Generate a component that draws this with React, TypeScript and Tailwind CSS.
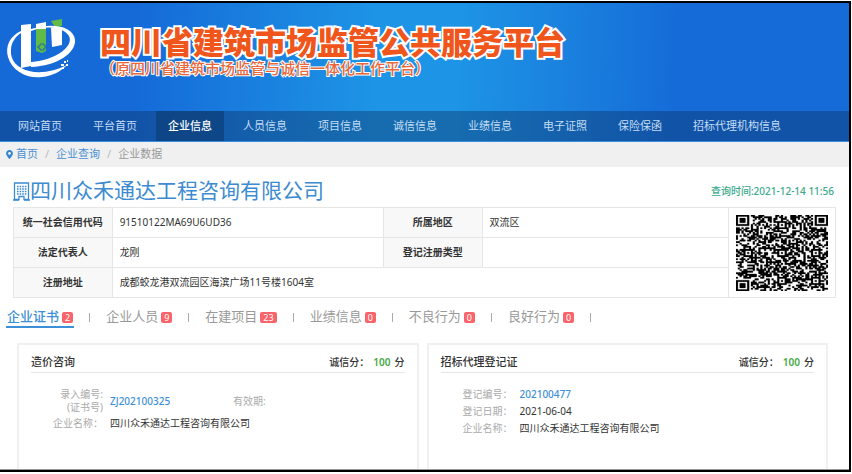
import * as React from "react";
import clsx from "clsx";
import { FaMapMarkerAlt } from "react-icons/fa";

const NAV_ITEMS = [
  "网站首页",
  "平台首页",
  "企业信息",
  "人员信息",
  "项目信息",
  "诚信信息",
  "业绩信息",
  "电子证照",
  "保险保函",
  "招标代理机构信息",
];

const TABS = [
  { label: "企业证书", count: 2 },
  { label: "企业人员", count: 9 },
  { label: "在建项目", count: 23 },
  { label: "业绩信息", count: 0 },
  { label: "不良行为", count: 0 },
  { label: "良好行为", count: 0 },
];

const QR_SIZE = 49;
const QR_ALIGN = [6, 24, 42];

// finder and alignment squares are fixed, the rest is filled from a small LCG
function buildQrPath() {
  let seed = 20211214;
  const rand = () => {
    seed = (seed * 1103515 + 12345) % 2147483648;
    return seed / 2147483648;
  };
  const isDark = (x: number, y: number, noise: boolean) => {
    for (const [cx, cy] of [
      [3, 3],
      [QR_SIZE - 4, 3],
      [3, QR_SIZE - 4],
    ]) {
      const d = Math.max(Math.abs(x - cx), Math.abs(y - cy));
      if (d <= 4) return d !== 2 && d !== 4;
    }
    for (const cx of QR_ALIGN) {
      for (const cy of QR_ALIGN) {
        const d = Math.max(Math.abs(x - cx), Math.abs(y - cy));
        const corner =
          (cx === 6 && cy === 6) ||
          (cx === 6 && cy === 42) ||
          (cx === 42 && cy === 6);
        if (!corner && d <= 2) return d !== 1;
      }
    }
    if (x === 6) return y % 2 === 0;
    if (y === 6) return x % 2 === 0;
    return noise;
  };
  let path = "";
  for (let y = 0; y < QR_SIZE; y++) {
    for (let x = 0; x < QR_SIZE; x++) {
      if (isDark(x, y, rand() < 0.52)) path += `M${x} ${y}h1v1h-1z`;
    }
  }
  return path;
}

function QrCode() {
  const path = React.useMemo(buildQrPath, []);
  return (
    <svg
      viewBox={`0 0 ${QR_SIZE} ${QR_SIZE}`}
      preserveAspectRatio="none"
      className="mx-auto h-[76px] w-[92px]"
      role="img"
      aria-label="二维码"
    >
      <path d={path} fill="#000" stroke="#000" strokeWidth="0.15" />
    </svg>
  );
}

function Logo() {
  return (
    <svg viewBox="4 17 76 66" className="h-[66px] w-[76px] shrink-0">
      {/* towers */}
      <path d="M21 25L31 24V66L21 68Z" fill="#fff" />
      <path d="M36 24L46 22V30H36Z" fill="#fff" />
      <path d="M51 28L62 27V45L52 47Z" fill="#fff" />
      <path d="M36 29H46V51L42 53L36 51Z" fill="#62bb46" />
      <path d="M51 21L62 19V26L55 27Z" fill="#62bb46" />
      <path
        d="M38 46h2v-2h4v2h2v2h-2v2h-4v-2h-2z"
        fill="none"
        stroke="#1b6fb0"
      />
      {/* upper ring, passing in front of the towers */}
      <path
        d="M31 31C46 25 63 27 69 36C74 46 57 60 31 62V67C57 66 76 53 75 40C74 26 52 22 31 29Z"
        fill="#fff"
      />
      {/* lower sweep */}
      <path
        d="M21 31C10 36 5 46 8 57C12 71 27 79 42 77C53 76 61 71 67 65C55 71 41 74 29 71C17 68 10 60 11 50C11 43 15 37 21 33Z"
        fill="#fff"
      />
      <path
        d="M61 64h3v2h-3zM64 61h2v2h-2zM67 60h1v2h-1zM66 64h2v2h-2zM62 67h2v2h-2z"
        fill="#fff"
      />
    </svg>
  );
}

function BuildingIcon() {
  return (
    <svg
      viewBox="0 0 17 19"
      className="h-[19px] w-[17px] shrink-0"
      fill="none"
      stroke="currentColor"
    >
      <path d="M1.5 1H15.5V17.5H11V14.5H6V17.5H1.5Z" strokeWidth="1.3" />
      <path
        d="M4 4.5H13.5M4 7H13.5M4 9.5H13.5M4 12H13.5"
        strokeWidth="1.3"
        strokeDasharray="1.6 1"
      />
      <path d="M0 18H6M11 18H17" strokeWidth="1.3" />
    </svg>
  );
}

function Header() {
  return (
    <header className="bg-[linear-gradient(92deg,#156ad8_0%,#156ad8_16%,#1a85e0_34%,#1d94e5_44%,#1d94e5_54%,#1a80de_67%,#156bd8_80%,#156bd8_100%)]">
      <div className="flex h-[108px] items-start pt-[14px] pl-1">
        <Logo />
        <div className="pt-[7px] pl-5">
          <h1 className="text-[31px] leading-9 font-black whitespace-nowrap text-[#f0561b] [-webkit-text-stroke:4px_white] [paint-order:stroke_fill]">
            四川省建筑市场监管公共服务平台
          </h1>
          <p className="text-[15px] leading-4 font-medium whitespace-nowrap text-[#e8683c] [-webkit-text-stroke:2px_white] [paint-order:stroke_fill]">
            （原四川省建筑市场监管与诚信一体化工作平台）
          </p>
        </div>
      </div>
      <nav className="flex h-[31px] gap-[7px] border-b border-[#3a8ddd] bg-[#0c3060]/40 pl-[6px] text-[11px] text-[#c3dcf3]">
        {NAV_ITEMS.map((item) => (
          <a
            key={item}
            href="#"
            className={clsx(
              "flex items-center px-3 whitespace-nowrap",
              item === "企业信息" && "bg-[#0d3f78]/70 font-medium text-white"
            )}
          >
            {item}
          </a>
        ))}
      </nav>
    </header>
  );
}

function Breadcrumb() {
  return (
    <div className="flex h-[25px] items-center bg-[#f0f0f0] pl-[5px] text-[11px] text-[#999]">
      <FaMapMarkerAlt className="mr-[2px] size-[9px] text-[#3284d0]" />
      <a href="#" className="text-[#4a90d3]">
        首页
      </a>
      <span className="px-[7px] text-[#bbb]">/</span>
      <a href="#" className="text-[#4a90d3]">
        企业查询
      </a>
      <span className="px-[7px] text-[#bbb]">/</span>
      <span>企业数据</span>
    </div>
  );
}

function InfoTable() {
  const th = "border border-[#e6e6e6] bg-[#f8f8f8] text-center font-bold";
  const td = "border border-[#e6e6e6] px-[7px]";
  return (
    <table className="w-full table-fixed border-collapse text-[10px] text-[#333]">
      <colgroup>
        <col className="w-[12%]" />
        <col className="w-[33%]" />
        <col className="w-[12%]" />
        <col className="w-[30%]" />
        <col className="w-[13%]" />
      </colgroup>
      <tbody>
        <tr className="h-[30px]">
          <th className={th}>统一社会信用代码</th>
          <td className={td}>91510122MA69U6UD36</td>
          <th className={th}>所属地区</th>
          <td className={td}>双流区</td>
          <td rowSpan={3} className="border border-[#e6e6e6]">
            <QrCode />
          </td>
        </tr>
        <tr className="h-[30px]">
          <th className={th}>法定代表人</th>
          <td className={td}>龙刚</td>
          <th className={th}>登记注册类型</th>
          <td className={td}></td>
        </tr>
        <tr className="h-[30px]">
          <th className={th}>注册地址</th>
          <td className={td} colSpan={3}>
            成都蛟龙港双流园区海滨广场11号楼1604室
          </td>
        </tr>
      </tbody>
    </table>
  );
}

function Tabs() {
  const [active, setActive] = React.useState(0);
  return (
    <div className="mt-[10px] flex h-5 pl-[6px] text-[13px] whitespace-nowrap text-[#999]">
      {TABS.map((tab, i) => (
        <React.Fragment key={tab.label}>
          <button
            type="button"
            onClick={() => setActive(i)}
            className={clsx(
              "flex items-center gap-[3px] border-b-2 px-px",
              i === active
                ? "border-[#3d8fd8] font-medium text-[#3d8fd8]"
                : "border-transparent"
            )}
          >
            {tab.label}
            <span className="rounded-xs bg-[#f8646a] px-[3px] text-[9px] leading-[11px] font-normal text-white">
              {tab.count}
            </span>
          </button>
          <span className="mx-[15px] mt-[5px] h-[9px] w-px bg-[#aaa]" />
        </React.Fragment>
      ))}
    </div>
  );
}

function Card({
  title,
  score,
  children,
}: {
  title: string;
  score: number;
  children: React.ReactNode;
}) {
  return (
    <section className="flex-1 border-2 border-b-0 border-[#f0f0f0] px-3 pt-2 text-[10px] text-[#333]">
      <div className="flex h-5 items-center justify-between border-b border-[#e6e6e6]">
        <h3 className="text-[11px] font-medium">{title}</h3>
        <p className="font-medium">
          诚信分：
          <span className="mx-1 font-semibold text-[#45a845]">{score}</span>
          分
        </p>
      </div>
      {children}
    </section>
  );
}

export default function App() {
  return (
    <div
      lang="zh-CN"
      className="flex min-h-screen flex-col bg-white pt-px pr-px pb-[2px] font-['Noto_Sans','Noto_Sans_CJK_SC',sans-serif]"
    >
      <div className="flex flex-1 flex-col border-t-2 border-r-2 border-b-2 border-black">
        <Header />
        <Breadcrumb />
        <main className="flex flex-1 flex-col border-b border-[#999]">
          <div className="px-[13px]">
            <div className="flex h-10 items-center justify-between pt-2 pr-[2px]">
              <h2 className="flex items-center text-[21px] text-[#3d8bd0]">
                <BuildingIcon />
                四川众禾通达工程咨询有限公司
              </h2>
              <span className="text-[10px] font-medium text-[#3aa98c]">
                查询时间:2021-12-14 11:56
              </span>
            </div>
            <InfoTable />
          </div>
          <Tabs />
          <div className="mt-[15px] flex flex-1 gap-2 pr-[21px] pl-[17px]">
            <Card title="造价咨询" score={100}>
              <dl className="mt-[15px] grid grid-cols-[72px_116px_1fr] items-center gap-x-[7px] gap-y-[3px] leading-[13px]">
                <dt className="text-right text-[#aaa]">
                  录入编号:
                  <br />
                  (证书号)
                </dt>
                <dd>
                  <a href="#" className="font-medium text-[#3d8fd8]">
                    ZJ202100325
                  </a>
                </dd>
                <dt className="text-[#aaa]">有效期:</dt>
                <dt className="text-right text-[#aaa]">企业名称：</dt>
                <dd className="col-span-2">四川众禾通达工程咨询有限公司</dd>
              </dl>
            </Card>
            <Card title="招标代理登记证" score={100}>
              <dl className="mt-[15px] grid grid-cols-[72px_1fr] gap-x-[7px] gap-y-1 leading-[13px]">
                <dt className="text-right text-[#aaa]">登记编号：</dt>
                <dd>
                  <a href="#" className="font-medium text-[#3d8fd8]">
                    202100477
                  </a>
                </dd>
                <dt className="text-right text-[#aaa]">登记日期：</dt>
                <dd>2021-06-04</dd>
                <dt className="text-right text-[#aaa]">企业名称：</dt>
                <dd>四川众禾通达工程咨询有限公司</dd>
              </dl>
            </Card>
          </div>
        </main>
      </div>
    </div>
  );
}
